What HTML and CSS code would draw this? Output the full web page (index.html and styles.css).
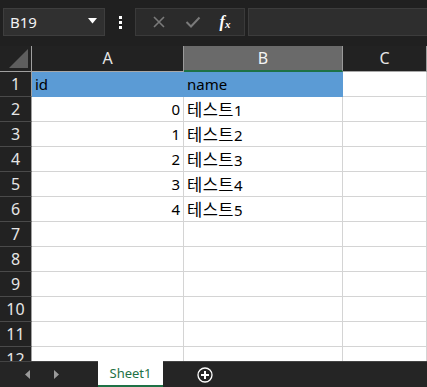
FILE: index.html
```html
<!DOCTYPE html>
<html>
<head>
  <meta charset="UTF-8">
  <title>Sheet1</title>
  <link rel="stylesheet" href="styles.css">
</head>
<body>
<div class="toolbar">
  <div class="name-box">
    <span>B19</span>
    <svg class="caret" width="9" height="6" viewBox="0 0 9 6"><path d="M0 0 H9 L4.5 5.5 Z" fill="#fff"/></svg>
  </div>
  <div class="dots"><i></i><i></i><i></i></div>
  <div class="fx-buttons">
    <svg width="14" height="14" viewBox="0 0 14 14"><path d="M2 2 L12 12 M12 2 L2 12" stroke="#7a7a7a" stroke-width="1.6" fill="none"/></svg>
    <svg width="16" height="14" viewBox="0 0 16 14"><path d="M1.5 7 L6 11.5 L14.5 2.5" stroke="#7a7a7a" stroke-width="2" fill="none"/></svg>
    <span class="fx">f<sub>x</sub></span>
  </div>
  <div class="formula-bar"></div>
</div>

<div class="sheet">
  <div class="grid">
    <div class="corner"><svg width="19" height="19" viewBox="0 0 19 19"><path d="M19 0 V19 H0 Z" fill="#5e5e5e"/></svg></div>
    <div class="col-head">A</div>
    <div class="col-head selected">B</div>
    <div class="col-head">C</div>
    <div class="col-head"></div>

    <div class="row-head">1</div>
    <div class="cell hdr">id</div>
    <div class="cell hdr">name</div>
    <div class="cell"></div><div class="cell"></div>

    <div class="row-head">2</div>
    <div class="cell num">0</div><div class="cell"><span class="ko">테스트</span>1</div>
    <div class="cell"></div><div class="cell"></div>
    <div class="row-head">3</div>
    <div class="cell num">1</div><div class="cell"><span class="ko">테스트</span>2</div>
    <div class="cell"></div><div class="cell"></div>
    <div class="row-head">4</div>
    <div class="cell num">2</div><div class="cell"><span class="ko">테스트</span>3</div>
    <div class="cell"></div><div class="cell"></div>
    <div class="row-head">5</div>
    <div class="cell num">3</div><div class="cell"><span class="ko">테스트</span>4</div>
    <div class="cell"></div><div class="cell"></div>
    <div class="row-head">6</div>
    <div class="cell num">4</div><div class="cell"><span class="ko">테스트</span>5</div>
    <div class="cell"></div><div class="cell"></div>

    <div class="row-head">7</div>
    <div class="cell"></div><div class="cell"></div><div class="cell"></div><div class="cell"></div>
    <div class="row-head">8</div>
    <div class="cell"></div><div class="cell"></div><div class="cell"></div><div class="cell"></div>
    <div class="row-head">9</div>
    <div class="cell"></div><div class="cell"></div><div class="cell"></div><div class="cell"></div>
    <div class="row-head">10</div>
    <div class="cell"></div><div class="cell"></div><div class="cell"></div><div class="cell"></div>
    <div class="row-head">11</div>
    <div class="cell"></div><div class="cell"></div><div class="cell"></div><div class="cell"></div>
    <div class="row-head">12</div>
    <div class="cell"></div><div class="cell"></div><div class="cell"></div><div class="cell"></div>
  </div>
</div>

<div class="tabbar">
  <div class="nav">
    <svg width="6" height="9" viewBox="0 0 6 9"><path d="M5 0 V9 L0 4.5 Z" fill="#9a9a9a"/></svg>
    <svg width="6" height="9" viewBox="0 0 6 9"><path d="M1 0 V9 L6 4.5 Z" fill="#9a9a9a"/></svg>
  </div>
  <div class="tab">Sheet1</div>
  <div class="add">
    <svg width="16" height="16" viewBox="0 0 16 16"><circle cx="8" cy="8" r="7" stroke="#fff" stroke-width="1.3" fill="none"/><path d="M8 4 V12 M4 8 H12" stroke="#fff" stroke-width="2"/></svg>
  </div>
</div>
</body>
</html>
```

FILE: styles.css
```css
* {
  margin: 0;
  padding: 0;
  box-sizing: border-box;
}

body {
  width: 427px;
  height: 387px;
  overflow: hidden;
  background: #222222;
  font-family: "Noto Sans", "Noto Sans CJK KR", sans-serif;
  color: #000;
}

/* top bar */
.toolbar {
  height: 46px;
  background: #202020;
  display: flex;
  align-items: flex-start;
  padding: 8px 0 0 3px;
}

.name-box {
  width: 102px;
  height: 28px;
  background: #303030;
  border: 1px solid #3e3e3e;
  display: flex;
  align-items: center;
  justify-content: space-between;
  padding: 0 7px 0 6px;
  color: #f2f2f2;
  font-size: 15px;
}

.caret {
  margin-top: -2px;
}

.dots {
  width: 30px;
  height: 28px;
  display: flex;
  flex-direction: column;
  align-items: center;
  justify-content: center;
  gap: 2px;
}

.dots i {
  display: block;
  width: 3px;
  height: 3px;
  background: #fff;
}

.fx-buttons {
  width: 110px;
  height: 28px;
  background: #2b2b2b;
  border: 1px solid #3a3a3a;
  display: flex;
  align-items: center;
  justify-content: space-around;
  padding: 0 4px 0 6px;
}

.fx {
  font-family: "Liberation Serif", serif;
  font-style: italic;
  font-weight: bold;
  color: #fff;
  font-size: 16px;
  line-height: 1;
}

.fx sub {
  font-size: 11px;
  vertical-align: -1px;
}

.formula-bar {
  flex: 1;
  height: 28px;
  margin-left: 3px;
  background: #2e2e2e;
  border: 1px solid #3c3c3c;
  border-right: none;
}

/* grid */
.sheet {
  height: 315px;
  overflow: hidden;
  background: #fff;
}

.grid {
  display: grid;
  grid-template-columns: 32px 152px 159px 84px 20px;
  grid-auto-rows: 25px;
  grid-template-rows: 26px;
}

.corner {
  background: #222;
  border-right: 1px solid #a0a0a0;
  border-bottom: 1px solid #a0a0a0;
  display: flex;
  align-items: flex-end;
  justify-content: flex-end;
  padding: 0 3px 3px 0;
}

.col-head {
  background: #222;
  color: #e6e6e6;
  font-size: 16px;
  text-align: center;
  line-height: 25px;
  border-right: 1px solid #9a9a9a;
  border-bottom: 1px solid #a8a8a8;
}

.col-head.selected {
  background: #6a6a6a;
  color: #f4f4f4;
  border-bottom: 2px solid #1e7145;
  line-height: 24px;
}

.row-head {
  background: #222;
  color: #e6e6e6;
  font-size: 16px;
  text-align: center;
  line-height: 24px;
  border-right: 1px solid #a0a0a0;
  border-bottom: 1px solid #4a4a4a;
}

.cell {
  background: #fff;
  border-right: 1px solid #d4d4d4;
  border-bottom: 1px solid #d4d4d4;
  font-size: 15px;
  line-height: 24px;
  padding: 0 3px;
  white-space: nowrap;
}

.cell .ko {
  font-family: "Noto Sans CJK KR", sans-serif;
  font-size: 16.5px;
  letter-spacing: 0.5px;
}

.cell.hdr {
  background: #5b9bd5;
  border-color: #5b9bd5;
}

.cell.num {
  text-align: right;
}

/* sheet tabs */
.tabbar {
  height: 26px;
  background: #252525;
  border-top: 1px solid #444;
  display: flex;
}

.nav {
  width: 98px;
  display: flex;
  align-items: center;
  padding-left: 25px;
  gap: 22px;
}

.tab {
  width: 65px;
  margin-top: -1px;
  background: #fff;
  border-bottom: 2px solid #1e7145;
  color: #1e7145;
  font-size: 13px;
  text-align: center;
  line-height: 25px;
}

.add {
  width: 84px;
  display: flex;
  align-items: center;
  justify-content: center;
}
```
